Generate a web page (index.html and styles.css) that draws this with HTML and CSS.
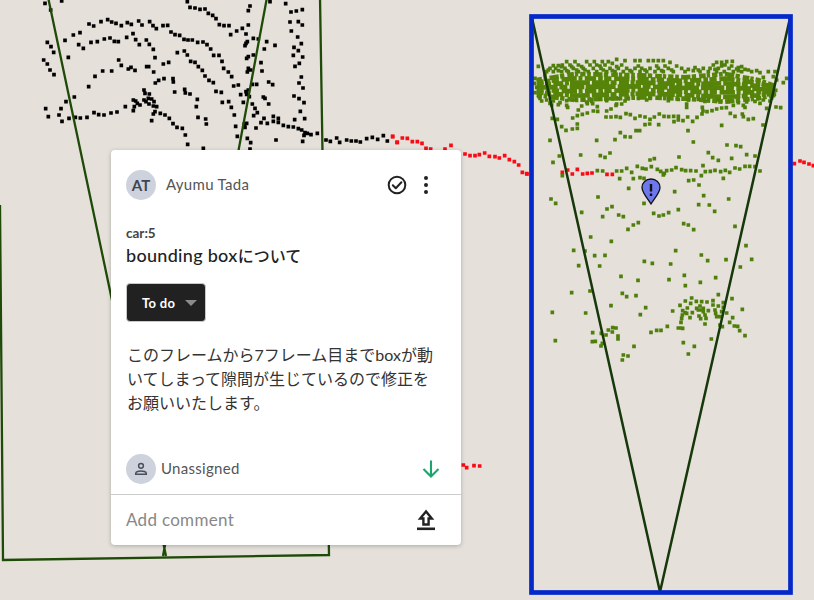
FILE: index.html
```html
<!DOCTYPE html>
<html lang="ja">
<head>
<meta charset="utf-8">
<title>Issue</title>
<link rel="stylesheet" href="styles.css">
</head>
<body>
<main class="viewer">
<svg class="cloud" viewBox="0 0 814 600" width="814" height="600" aria-hidden="true">
  <g transform="scale(.33333)">
    <path class="pts pts-black" d="M135 10h0M152 30h0M185 3h0M562 5h0M570 22h0M585 24h0M600 28h0M615 27h0M625 40h0M638 46h0M648 56h0M658 74h0M672 77h0M687 77h0M692 104h0M710 93h0M727 85h0M745 75h0M738 102h0M745 32h0M750 18h0M810 5h0M857 11h0M873 36h0M889 33h0M907 29h0M870 66h0M895 65h0M907 75h0M874 93h0M893 111h0M904 131h0M882 142h0M895 152h0M880 166h0M908 171h0M898 190h0M885 199h0M904 231h0M897 249h0M909 264h0M882 288h0M897 296h0M912 308h0M901 334h0M884 359h0M914 356h0M267 72h0M281 78h0M303 65h0M323 59h0M335 66h0M348 70h0M364 77h0M382 68h0M394 73h0M416 63h0M426 75h0M449 65h0M459 77h0M469 86h0M489 77h0M503 76h0M513 96h0M525 104h0M539 106h0M552 118h0M564 120h0M577 120h0M593 127h0M609 126h0M621 134h0M632 147h0M641 166h0M657 166h0M666 184h0M671 205h0M685 216h0M695 230h0M715 255h0M701 258h0M142 127h0M153 140h0M161 157h0M195 121h0M220 105h0M240 98h0M236 134h0M250 145h0M273 127h0M292 125h0M313 117h0M330 114h0M343 124h0M355 125h0M380 112h0M399 101h0M407 119h0M418 134h0M439 120h0M448 133h0M460 148h0M465 173h0M205 172h0M131 180h0M142 192h0M150 210h0M162 224h0M356 180h0M364 196h0M385 207h0M393 202h0M405 211h0M440 200h0M446 200h0M461 216h0M490 192h0M506 187h0M532 158h0M553 153h0M562 165h0M572 184h0M585 187h0M595 200h0M607 211h0M615 228h0M627 241h0M640 248h0M648 274h0M664 277h0M266 260h0M285 229h0M308 213h0M335 213h0M466 249h0M476 241h0M492 236h0M519 236h0M520 246h0M524 276h0M554 268h0M556 279h0M570 282h0M592 298h0M589 320h0M594 352h0M617 357h0M619 372h0M137 326h0M145 350h0M177 345h0M186 364h0M183 326h0M198 305h0M223 291h0M207 355h0M226 352h0M241 354h0M261 352h0M282 338h0M296 344h0M312 345h0M333 339h0M351 336h0M376 320h0M400 300h0M407 303h0M412 310h0M403 320h0M400 332h0M420 315h0M432 270h0M435 280h0M448 282h0M445 295h0M432 300h0M438 305h0M455 297h0M462 305h0M447 312h0M460 318h0M470 320h0M465 335h0M460 342h0M481 340h0M495 345h0M508 355h0M519 371h0M531 382h0M547 385h0M556 405h0M563 433h0M455 362h0M610 445h0M667 307h0M686 305h0M694 322h0M703 345h0M707 379h0M712 409h0M722 284h0M730 307h0M738 275h0M745 270h0M740 283h0M748 290h0M770 253h0M757 253h0M806 246h0M818 254h0M790 291h0M795 295h0M806 312h0M757 312h0M765 325h0M772 338h0M761 347h0M792 355h0M783 368h0M768 384h0M802 370h0M820 349h0M835 355h0M820 364h0M835 367h0M850 376h0M865 380h0M880 381h0M895 386h0M905 390h0M915 398h0M912 406h0M922 400h0M933 404h0M952 400h0M978 420h0M991 424h0M1010 414h0M1019 427h0M1040 420h0M1054 423h0M1068 423h0M1081 426h0M1100 416h0M1117 412h0M1133 418h0M1150 407h0M1162 423h0M908 424h0M828 420h0M742 415h0M752 428h0M740 370h0M735 382h0M733 372h0M738 130h0M742 125h0M735 137h0M760 165h0M740 175h0M745 170h0M783 188h0M745 205h0M752 210h0M742 216h0M786 213h0M800 125h0M775 117h0M760 115h0M793 147h0M825 136h0M750 447h0"/>
    <path class="pts pts-red" d="M1178 410h0M1191 427h0"/>
  </g>
  <g transform="translate(380 125) scale(.33333)">
    <path class="pts pts-red" d="M38 34h0M52 52h0M67 39h0M82 40h0M97 50h0M112 50h0M126 55h0M138 70h0M152 72h0M195 72h0M213 61h0M255 87h0M270 92h0M285 92h0M298 89h0M314 84h0M328 94h0M345 95h0M358 99h0M374 92h0M388 104h0M403 110h0M416 120h0M427 142h0M441 147h0"/>
  </g>
  <g transform="translate(405 450) scale(.33333)">
    <path class="pts pts-red" d="M175 45h0M185 53h0M207 47h0M224 48h0"/>
  </g>
  <g transform="translate(525 0) scale(.33333)">
    <path class="pts pts-red" d="M5 521h0M112 517h0M128 510h0M142 522h0M157 508h0M173 522h0M187 520h0M201 519h0M246 523h0M262 523h0M808 491h0M825 483h0M837 487h0M852 492h0M865 497h0"/>
    <path class="row row-a" d="M35 240L150 222 350 226 480 232 600 222 700 240 750 258"/>
    <path class="row row-b" d="M35 247L150 235 350 237 480 243 600 236 700 249 750 262"/>
    <path class="row row-c" d="M35 255L150 248 350 248 480 253 600 250 700 258 750 267"/>
    <path class="row row-d" d="M35 262L150 261 350 259 480 264 600 263 700 267 750 271"/>
    <path class="row row-b" d="M35 270L150 274 350 270 480 275 600 277 700 277 750 276"/>
    <path class="row row-c" d="M35 277L150 287 350 281 480 285 600 291 700 286 750 280"/>
    <path class="row row-a" d="M35 285L150 300 350 292 480 296 600 305 700 295 750 285"/>
    <path class="pts pts-green" d="M125 185h0M150 185h0M185 185h0M208 185h0M232 185h0M250 185h0M275 178h0M300 182h0M330 182h0M345 182h0M370 182h0M385 182h0M400 182h0M415 182h0M575 187h0M590 187h0M605 185h0M622 184h0M85 197h0M100 197h0M112 195h0M135 195h0M160 195h0M195 195h0M215 195h0M240 195h0M262 190h0M290 195h0M435 187h0M455 198h0M565 195h0M600 195h0M640 203h0M40 199h0M75 205h0M92 205h0M120 205h0M145 205h0M175 205h0M205 205h0M228 205h0M255 205h0M280 205h0M305 205h0M330 205h0M350 205h0M375 205h0M400 205h0M430 205h0M470 205h0M490 208h0M535 205h0M555 205h0M580 205h0M612 205h0M635 207h0M660 208h0M65 215h0M85 215h0M110 215h0M130 215h0M160 215h0M190 215h0M215 215h0M245 215h0M270 215h0M295 215h0M320 215h0M345 215h0M365 215h0M390 215h0M415 215h0M445 215h0M480 215h0M505 212h0M525 215h0M550 215h0M575 215h0M598 215h0M625 215h0M650 215h0M680 215h0M705 218h0M730 215h0M750 215h0M110 200h0M140 200h0M170 200h0M225 198h0M275 200h0M340 198h0M395 198h0M420 198h0M510 203h0M590 198h0M620 198h0M650 200h0M70 210h0M100 212h0M125 212h0M155 210h0M180 210h0M235 210h0M262 212h0M315 212h0M360 210h0M410 212h0M440 210h0M520 210h0M570 208h0M640 212h0M670 210h0M695 212h0M60 225h0M745 230h0M30 235h0M785 235h0M775 248h0M755 240h0M715 232h0M35 262h0M28 250h0M752 271h0M748 283h0M30 278h0M42 290h0M45 295h0M65 300h0M85 303h0M105 308h0M125 302h0M150 300h0M175 298h0M200 298h0M225 297h0M255 296h0M280 296h0M310 296h0M340 295h0M375 295h0M400 294h0M430 294h0M460 298h0M490 300h0M520 298h0M550 300h0M580 300h0M610 305h0M640 308h0M665 306h0M690 304h0M715 300h0M740 294h0M50 303h0M75 310h0M100 314h0M125 316h0M185 306h0M200 304h0M245 302h0M275 312h0M300 303h0M365 300h0M430 302h0M485 312h0M540 304h0M585 306h0M625 316h0M655 316h0M705 310h0M735 303h0M80 315h0M128 322h0M290 312h0M485 322h0M532 322h0M660 322h0M725 325h0M75 421h0M215 421h0M270 419h0M286 398h0M300 410h0M316 411h0M333 392h0M344 392h0M401 374h0M360 374h0M374 372h0M489 392h0M505 426h0M590 376h0M714 375h0M606 435h0M633 437h0M647 440h0M550 458h0M563 473h0M580 481h0M620 475h0M665 464h0M690 468h0M462 471h0M375 480h0M388 476h0M255 459h0M240 472h0M226 467h0M167 465h0M103 468h0M84 487h0M110 380h0M123 391h0M142 387h0M157 385h0M157 372h0M82 355h0M97 358h0M143 354h0M157 347h0M172 343h0M187 339h0M160 330h0M170 318h0M187 311h0M203 311h0M217 320h0M218 334h0M205 333h0M245 333h0M258 327h0M273 316h0M243 351h0M258 351h0M273 350h0M286 352h0M303 341h0M316 344h0M330 355h0M345 348h0M360 351h0M375 358h0M388 351h0M403 342h0M417 349h0M431 350h0M446 349h0M460 349h0M447 365h0M460 360h0M474 362h0M488 351h0M503 364h0M516 352h0M531 342h0M546 335h0M561 332h0M575 327h0M590 324h0M604 323h0M616 340h0M630 349h0M652 342h0M655 350h0M670 358h0M685 356h0M753 321h0M767 323h0M534 333h0M112 527h0M217 512h0M233 513h0M275 513h0M290 513h0M305 505h0M320 517h0M337 499h0M352 505h0M363 507h0M379 500h0M397 508h0M407 514h0M418 520h0M425 512h0M440 510h0M453 503h0M470 509h0M482 512h0M497 512h0M513 513h0M534 497h0M529 527h0M541 515h0M556 514h0M570 511h0M587 515h0M601 511h0M614 517h0M630 504h0M644 507h0M660 499h0M674 499h0M690 500h0M705 513h0M284 536h0M325 536h0M345 533h0M357 535h0M415 525h0M491 542h0M506 540h0M522 555h0M595 535h0M311 565h0M219 591h0M78 597h0M92 610h0M357 610h0M449 575h0M536 587h0M521 614h0M553 615h0M611 597h0M460 629h0M431 638h0M415 645h0M402 648h0M386 640h0M569 634h0M261 620h0M246 627h0M170 637h0M233 650h0M281 645h0M295 650h0"/>
  </g>
  <g transform="translate(525 220) scale(.33333)">
    <path class="pts pts-green" d="M309 28h0M325 15h0M340 8h0M476 11h0M490 15h0M506 29h0M630 19h0M197 51h0M259 64h0M146 91h0M209 107h0M240 106h0M180 93h0M452 92h0M529 105h0M548 122h0M603 119h0M663 77h0M680 118h0M646 141h0M161 137h0M224 138h0M358 124h0M382 130h0M437 132h0M288 169h0M339 181h0M432 179h0M478 166h0M481 197h0M526 187h0M572 173h0M140 218h0M195 213h0M292 220h0M305 230h0M333 227h0M580 224h0M621 236h0M258 257h0M362 263h0M346 284h0M82 277h0M182 279h0M443 273h0M652 268h0M623 293h0M614 307h0M427 319h0M408 331h0M395 331h0M378 337h0M460 324h0M467 324h0M473 325h0M203 338h0M250 330h0M263 323h0M273 324h0M262 336h0M229 340h0M243 345h0M279 348h0M279 357h0M91 362h0M202 365h0M211 364h0M232 370h0M228 378h0M327 379h0M295 405h0M309 408h0M292 420h0M475 368h0M508 379h0M490 402h0M559 357h0M660 347h0M644 332h0M638 319h0M628 318h0M592 320h0M585 315h0M465 256h0M481 243h0M500 234h0M497 250h0M514 244h0M530 245h0M546 246h0M564 242h0M564 255h0M580 258h0M595 248h0M595 262h0M487 264h0M473 272h0M515 265h0M525 258h0M535 265h0M520 270h0M535 275h0M550 272h0M570 270h0M572 280h0M590 275h0M605 279h0M585 290h0M472 285h0M485 280h0M495 293h0M502 278h0M522 288h0M527 296h0M540 285h0M543 295h0M470 295h0M468 307h0M540 312h0M575 290h0M480 278h0M530 270h0"/>
  </g>
  <path class="frame" d="M48 -3L166 556M268 -8L163 556M320 -3L329 555 3 560 0 205"/>
  <path class="frustum" d="M532 18L660 592 790 18"/>
  <rect class="box" x="531.500" y="16.500" width="259" height="576"/>
</svg>

<svg class="pin" viewBox="0 0 20 27" width="20" height="27" aria-label="Issue marker">
  <path class="pin-body" d="M10 1C4.800 1 1 4.700 1 9.500 1 14.500 6.500 20.500 10 26 13.500 20.500 19 14.500 19 9.500 19 4.700 15.200 1 10 1Z"/>
  <path class="pin-mark" d="M8.800 6h2.400v7.600H8.800zM8.800 15.400h2.400v2.600H8.800z"/>
</svg>

<article class="card">
  <header class="card-head">
    <span class="avatar">AT</span>
    <span class="author">Ayumu Tada</span>
    <svg class="icon-check" viewBox="0 0 20 20" width="20" height="20" aria-hidden="true">
      <circle cx="10" cy="10" r="8.300"/>
      <path d="M5.800 10.300l3 3 5.600-6"/>
    </svg>
    <svg class="icon-more" viewBox="0 0 6 20" width="6" height="20" aria-hidden="true">
      <circle cx="3" cy="3" r="2"/><circle cx="3" cy="10" r="2"/><circle cx="3" cy="17" r="2"/>
    </svg>
  </header>
  <div class="card-main">
    <p class="label">car:5</p>
    <h1 class="title"><span class="title-latin">bounding box</span>について</h1>
    <button class="status" type="button">To do<span class="caret"></span></button>
    <p class="body">このフレームから7フレーム目までboxが動いてしまって隙間が生じているので修正をお願いいたします。</p>
  </div>
  <div class="assignee">
    <span class="avatar avatar-user">
      <svg viewBox="0 0 16 16" width="16" height="16" aria-hidden="true">
        <circle cx="8" cy="4.800" r="2.400"/>
        <path d="M2.700 13.200v-.8c0-1.600 3.300-2.500 5.300-2.500s5.300.9 5.300 2.500v.8z"/>
      </svg>
    </span>
    <span class="assignee-name">Unassigned</span>
    <svg class="icon-down" viewBox="0 0 20 20" width="20" height="20" aria-hidden="true">
      <path d="M10 1.500v16M2.500 10l7.500 7.500 7.500-7.500"/>
    </svg>
  </div>
  <footer class="comment">
    <span class="comment-hint">Add comment</span>
    <svg class="icon-upload" viewBox="0 0 20 22" width="20" height="22" aria-hidden="true">
      <path class="up-arrow" d="M10 2.500L4.200 9.500H7.400V15.500h5.200V9.500h3.200z"/>
      <path class="up-base" d="M1 19.800h18"/>
    </svg>
  </footer>
</article>
</main>
</body>
</html>
```
FILE: styles.css
```css
* { box-sizing: border-box; }
html, body { margin: 0; padding: 0; }
body { width: 814px; height: 600px; overflow: hidden; background: #e5e1da; }
.viewer { position: relative; width: 814px; height: 600px; overflow: hidden; font-family: "Lato", "Noto Sans CJK JP", sans-serif; color: #333; }
.cloud { position: absolute; left: 0; top: 0; display: block; filter: blur(.45px); }
.pts { fill: none; stroke-linecap: square; stroke-width: 11; }
.pts-black { stroke: #000; }
.pts-red { stroke: #fa0a14; }
.pts-green { stroke: #4f7f0b; }
.row { fill: none; stroke: #558409; stroke-width: 14; }
.row-a { stroke-dasharray: 16 5 11 7 28 4 13 9 20 3 10 6; }
.row-b { stroke-dasharray: 34 6 14 4 22 8 46 5 12 7; stroke-dashoffset: 13; }
.row-c { stroke-dasharray: 52 4 18 7 30 5 12 3 60 6; stroke-dashoffset: 31; }
.row-d { stroke-dasharray: 70 5 24 7 44 4 90 6; stroke-dashoffset: 7; }
.frame { fill: none; stroke: #1f4a08; stroke-width: 2.300; }
.frustum { fill: none; stroke: #16380a; stroke-width: 2.500; }
.box { fill: none; stroke: #0528c8; stroke-width: 4.700; }
.pin { position: absolute; left: 641px; top: 177.500px; display: block; }
.pin-body { fill: #6d78ee; stroke: #111; stroke-width: 1.300; }
.pin-mark { fill: #111; }

.card { position: absolute; left: 111px; top: 150px; width: 350px; height: 395px; display: flex; flex-direction: column; background: #fff; border-radius: 4px; box-shadow: 0 1px 4px rgba(0,0,0,.25); }
.card-head { display: flex; align-items: center; height: 30px; margin: 20px 0 0 15px; }
.avatar { flex: none; display: flex; align-items: center; justify-content: center; width: 30px; height: 30px; border-radius: 50%; background: #cdd2dd; color: #3f4652; font-size: 15px; font-weight: 700; }
.author { flex: 1; margin-left: 10px; padding-bottom: 2px; font-size: 15px; letter-spacing: .3px; color: #555; }
.icon-check { display: block; margin-right: 16px; fill: none; stroke: #222; stroke-width: 2; stroke-linecap: round; stroke-linejoin: round; }
.icon-more { display: block; margin-right: 32px; fill: #222; }
.card-main { flex: 1; padding: 0 15px; }
.label { margin: 25px 0 0; font-size: 13.500px; line-height: 16px; font-weight: 700; color: #444; }
.title { margin: 2px 0 0; font-size: 16px; line-height: 24px; font-weight: 500; color: #222; }
.title-latin { font-size: 18px; letter-spacing: .3px; }
.status { display: flex; align-items: center; width: 80px; height: 39px; margin: 15px 0 0; padding: 0 0 0 15px; background: #212121; border: 1px solid #c9c9c9; border-radius: 4px; color: #fff; font: 700 13px "Lato", sans-serif; letter-spacing: .3px; }
.caret { width: 0; height: 0; margin-left: 10px; border-style: solid; border-width: 6px 6px 0; border-color: #8c8c8c transparent transparent; }
.body { width: 316px; margin: 21px 0 0 1px; font-size: 16px; line-height: 24px; color: #333; }
.assignee { display: flex; align-items: center; height: 30px; margin: 0 0 10px 15px; }
.avatar-user svg { display: block; fill: none; stroke: #49505c; stroke-width: 1.500; }
.assignee-name { flex: 1; margin-left: 5px; padding-bottom: 2px; font-size: 15px; letter-spacing: .3px; color: #555; }
.icon-down { display: block; margin-right: 20px; fill: none; stroke: #1aa56f; stroke-width: 2.100; }
.comment { display: flex; align-items: center; height: 51px; padding: 0 25px 0 15px; border-top: 1px solid #ccc; }
.comment-hint { flex: 1; padding-bottom: 2px; font-size: 17px; letter-spacing: .3px; color: #888; }
.icon-upload { display: block; }
.up-arrow { fill: none; stroke: #222; stroke-width: 2.400; stroke-linejoin: miter; }
.up-base { fill: none; stroke: #222; stroke-width: 2.600; }
```
